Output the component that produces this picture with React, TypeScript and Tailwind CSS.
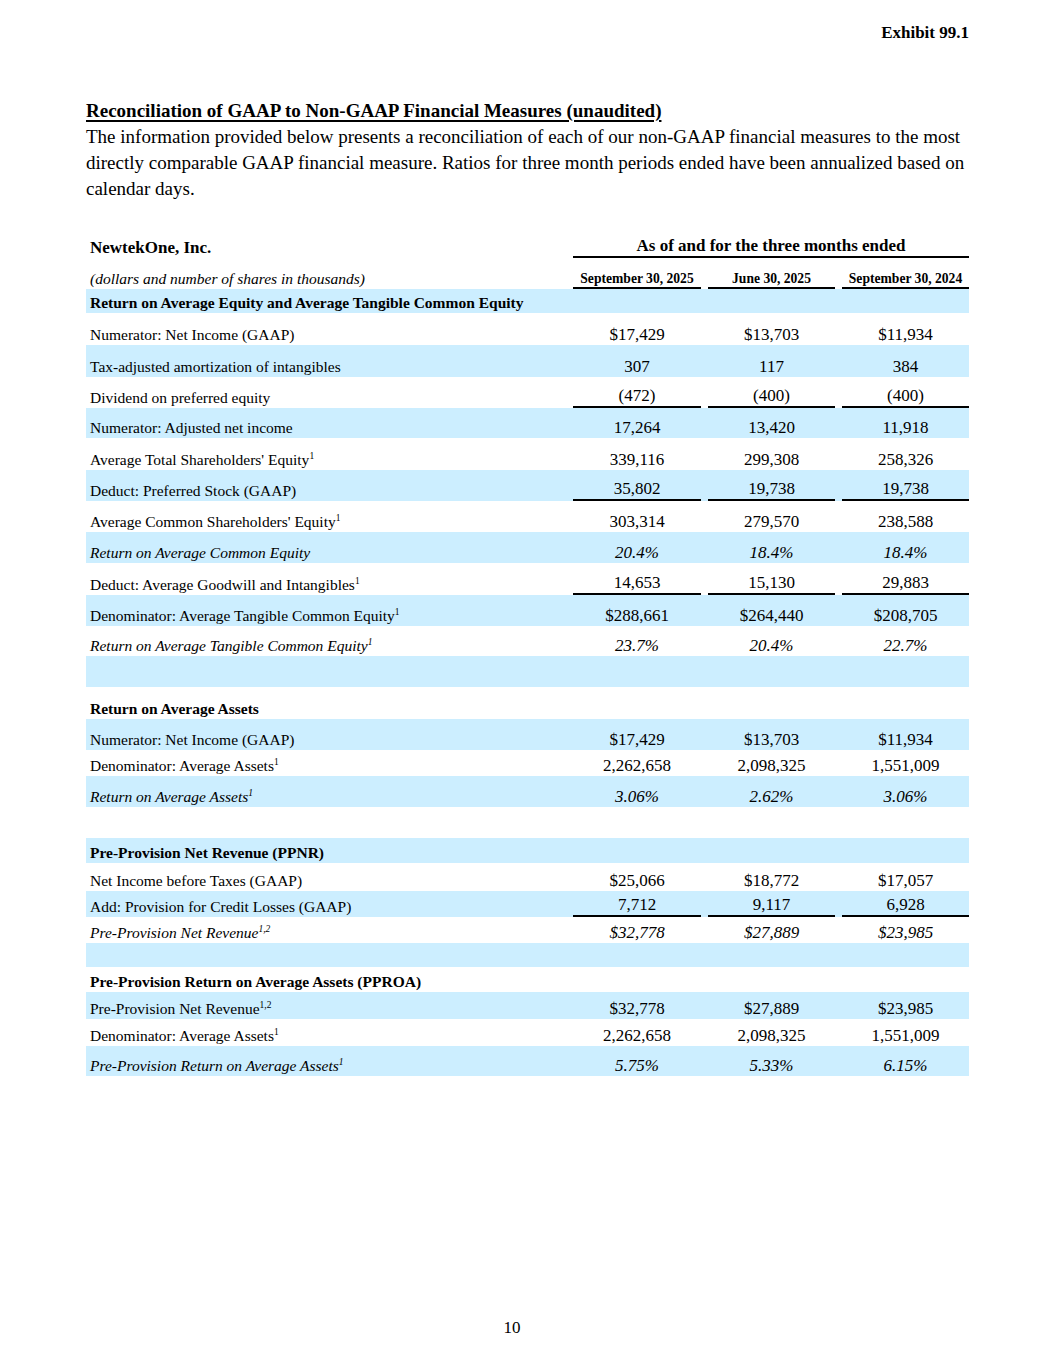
import React from "react";

type Row = {
  label?: React.ReactNode;
  vals?: string[];
  h: string;
  blue?: boolean;
  lbl?: "b" | "i" | "n";
  vi?: boolean;
  ul?: boolean;
};

const Sup = ({ children }: { children: React.ReactNode }) => (
  <sup className="text-[9.5px] -top-[6px]">{children}</sup>
);

const rows: Row[] = [
  { label: "Return on Average Equity and Average Tangible Common Equity", h: "h-[24px]", blue: true, lbl: "b" },
  { label: "Numerator: Net Income (GAAP)", vals: ["$17,429", "$13,703", "$11,934"], h: "h-[32px]" },
  { label: "Tax-adjusted amortization of intangibles", vals: ["307", "117", "384"], h: "h-[32px]", blue: true },
  { label: "Dividend on preferred equity", vals: ["(472)", "(400)", "(400)"], h: "h-[31px]", ul: true },
  { label: "Numerator: Adjusted net income", vals: ["17,264", "13,420", "11,918"], h: "h-[30px]", blue: true },
  { label: <>Average Total Shareholders' Equity<Sup>1</Sup></>, vals: ["339,116", "299,308", "258,326"], h: "h-[32px]" },
  { label: "Deduct: Preferred Stock (GAAP)", vals: ["35,802", "19,738", "19,738"], h: "h-[31px]", blue: true, ul: true },
  { label: <>Average Common Shareholders' Equity<Sup>1</Sup></>, vals: ["303,314", "279,570", "238,588"], h: "h-[31px]" },
  { label: "Return on Average Common Equity", vals: ["20.4%", "18.4%", "18.4%"], h: "h-[31px]", blue: true, lbl: "i", vi: true },
  { label: <>Deduct: Average Goodwill and Intangibles<Sup>1</Sup></>, vals: ["14,653", "15,130", "29,883"], h: "h-[32px]", ul: true },
  { label: <>Denominator: Average Tangible Common Equity<Sup>1</Sup></>, vals: ["$288,661", "$264,440", "$208,705"], h: "h-[31px]", blue: true },
  { label: <>Return on Average Tangible Common Equity<Sup>1</Sup></>, vals: ["23.7%", "20.4%", "22.7%"], h: "h-[30px]", lbl: "i", vi: true },
  { h: "h-[31px]", blue: true },
  { label: "Return on Average Assets", h: "h-[32px]", lbl: "b" },
  { label: "Numerator: Net Income (GAAP)", vals: ["$17,429", "$13,703", "$11,934"], h: "h-[31px]", blue: true },
  { label: <>Denominator: Average Assets<Sup>1</Sup></>, vals: ["2,262,658", "2,098,325", "1,551,009"], h: "h-[26px]" },
  { label: <>Return on Average Assets<Sup>1</Sup></>, vals: ["3.06%", "2.62%", "3.06%"], h: "h-[31px]", blue: true, lbl: "i", vi: true },
  { h: "h-[31px]" },
  { label: "Pre-Provision Net Revenue (PPNR)", h: "h-[25px]", blue: true, lbl: "b" },
  { label: "Net Income before Taxes (GAAP)", vals: ["$25,066", "$18,772", "$17,057"], h: "h-[28px]" },
  { label: "Add: Provision for Credit Losses (GAAP)", vals: ["7,712", "9,117", "6,928"], h: "h-[26px]", blue: true, ul: true },
  { label: <>Pre-Provision Net Revenue<Sup>1,2</Sup></>, vals: ["$32,778", "$27,889", "$23,985"], h: "h-[26px]", lbl: "i", vi: true },
  { h: "h-[24px]", blue: true },
  { label: "Pre-Provision Return on Average Assets (PPROA)", h: "h-[25px]", lbl: "b" },
  { label: <>Pre-Provision Net Revenue<Sup>1,2</Sup></>, vals: ["$32,778", "$27,889", "$23,985"], h: "h-[27px]", blue: true },
  { label: <>Denominator: Average Assets<Sup>1</Sup></>, vals: ["2,262,658", "2,098,325", "1,551,009"], h: "h-[27px]" },
  { label: <>Pre-Provision Return on Average Assets<Sup>1</Sup></>, vals: ["5.75%", "5.33%", "6.15%"], h: "h-[30px]", blue: true, lbl: "i", vi: true },
];

const colM = ["ml-[2px] mr-[4px]", "ml-[3px] mr-[4px]", "ml-[3px] mr-0"];
const GRID = "grid grid-cols-[485px_134px_134px_130px]";

export default function App() {
  return (
    <div
      className="w-[1055px] min-h-[1365px] bg-white text-black"
      style={{ fontFamily: '"Liberation Serif", "Times New Roman", serif' }}
    >
      <div className="w-[883px] ml-[86px] flex flex-col">
        <div className="pt-[23px] text-right font-bold text-[17px] leading-[20px]">Exhibit 99.1</div>

        <div className="mt-[55px] text-[19px] leading-[26px]">
          <div className="font-bold underline decoration-[1.5px] underline-offset-[3px]">
            Reconciliation of GAAP to Non-GAAP Financial Measures (unaudited)
          </div>
          <p>
            The information provided below presents a reconciliation of each of our non-GAAP financial measures to the most
            <br />
            directly comparable GAAP financial measure. Ratios for three month periods ended have been annualized based on
            <br />
            calendar days.
          </p>
        </div>

        <div className="mt-[30px] flex flex-col">
          <div className={`${GRID} h-[26px]`}>
            <div className="flex items-end pl-[4px] font-bold text-[17px] leading-[20px]">
              <span>NewtekOne, Inc.</span>
            </div>
            <div className="col-span-3 ml-[2px] flex items-end justify-center border-b-2 border-black font-bold text-[17px] leading-[20px]">
              <span>As of and for the three months ended</span>
            </div>
          </div>
          <div className={`${GRID} h-[31px]`}>
            <div className="flex items-end pl-[4px] italic text-[15.5px] leading-[20px]">
              <span>(dollars and number of shares in thousands)</span>
            </div>
            {["September 30, 2025", "June 30, 2025", "September 30, 2024"].map((t, i) => (
              <div
                key={t}
                className={`${colM[i]} flex items-end justify-center border-b-2 border-black font-bold text-[13.6px] leading-[16px]`}
              >
                <span>{t}</span>
              </div>
            ))}
          </div>

          {rows.map((r, idx) => (
            <div key={idx} className={`${GRID} ${r.h} ${r.blue ? "bg-[#cceeff]" : ""}`}>
              <div
                className={`flex items-end pl-[4px] text-[15.5px] leading-[20px] whitespace-nowrap ${
                  r.lbl === "b" ? "font-bold" : r.lbl === "i" ? "italic" : ""
                }`}
              >
                <span>{r.label}</span>
              </div>
              {[0, 1, 2].map((i) => (
                <div
                  key={i}
                  className={`${colM[i]} flex items-end justify-center text-[17px] leading-[20px] ${
                    r.ul ? "border-b-2 border-black" : ""
                  } ${r.vi ? "italic" : ""}`}
                >
                  <span>{r.vals ? r.vals[i] : ""}</span>
                </div>
              ))}
            </div>
          ))}
        </div>

        <div className="mt-[242px] flex justify-center pr-[31px] text-[17px] leading-[20px]">10</div>
      </div>
    </div>
  );
}
